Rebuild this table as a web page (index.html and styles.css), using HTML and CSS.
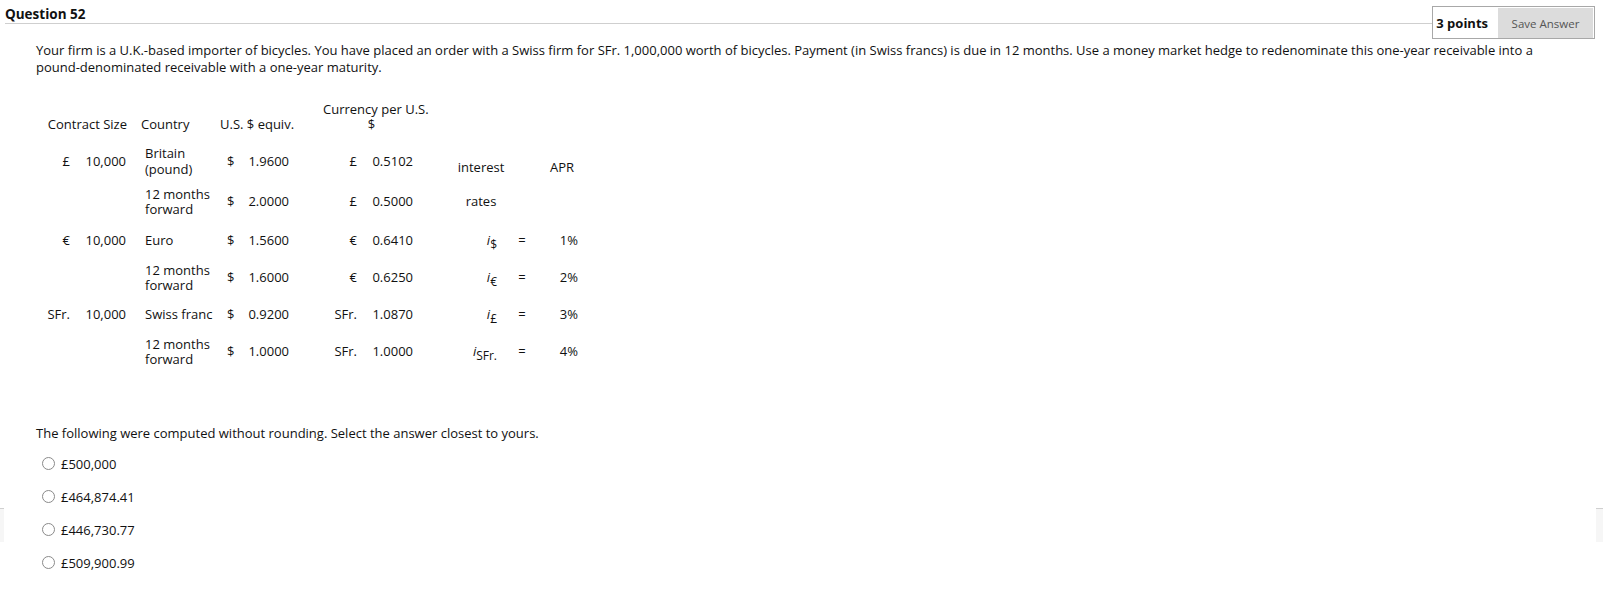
FILE: index.html
```html
<!DOCTYPE html>
<html lang="en">
<head>
<meta charset="utf-8">
<title>Question 52</title>
<link rel="stylesheet" href="styles.css">
</head>
<body>
<span class="edge edge-left"></span>
<span class="edge edge-right"></span>
<div class="qhead">
  <h3 class="qtitle">Question 52</h3>
  <div class="points">
    <span class="pts">3 points</span>
    <button class="save" type="button">Save Answer</button>
  </div>
</div>
<div class="qbody">
  <p class="qtext">Your firm is a U.K.-based importer of bicycles. You have placed an order with a Swiss firm for SFr. 1,000,000 worth of bicycles. Payment (in Swiss francs) is due in 12 months. Use a money market hedge to redenominate this one-year receivable into a pound-denominated receivable with a one-year maturity.</p>

  <table class="fx">
    <colgroup>
      <col class="c1"><col class="c2"><col class="c3"><col class="c4"><col class="c5"><col class="c6"><col class="c7"><col class="c8"><col class="c9"><col class="c10"><col class="c11">
    </colgroup>
    <tr class="hrow">
      <th colspan="2" class="h-size">Contract Size</th>
      <th class="h-country">Country</th>
      <th colspan="2" class="h-usd">U.S. $ equiv.</th>
      <th colspan="2" class="h-cur">Currency per U.S.<br>$</th>
      <th></th><th></th><th></th><th></th>
    </tr>
    <tr class="r1">
      <td class="sym">£</td><td class="num">10,000</td>
      <td class="country tall">Britain<br>(pound)</td>
      <td class="dsym">$</td><td class="dnum">1.9600</td>
      <td class="csym">£</td><td class="cnum">0.5102</td>
      <td></td>
      <td class="lbl low">interest</td><td></td><td class="apr low">APR</td>
    </tr>
    <tr class="r2">
      <td></td><td></td>
      <td class="country">12 months<br>forward</td>
      <td class="dsym">$</td><td class="dnum">2.0000</td>
      <td class="csym">£</td><td class="cnum">0.5000</td>
      <td></td>
      <td class="lbl">rates</td><td></td><td></td>
    </tr>
    <tr class="r3">
      <td class="sym">€</td><td class="num">10,000</td>
      <td class="country">Euro</td>
      <td class="dsym">$</td><td class="dnum">1.5600</td>
      <td class="csym">€</td><td class="cnum">0.6410</td>
      <td></td>
      <td class="ivar"><i>i</i><sub>$</sub></td><td class="eq">=</td><td class="pct">1%</td>
    </tr>
    <tr class="r4">
      <td></td><td></td>
      <td class="country">12 months<br>forward</td>
      <td class="dsym">$</td><td class="dnum">1.6000</td>
      <td class="csym">€</td><td class="cnum">0.6250</td>
      <td></td>
      <td class="ivar"><i>i</i><sub>€</sub></td><td class="eq">=</td><td class="pct">2%</td>
    </tr>
    <tr class="r5">
      <td class="sym">SFr.</td><td class="num">10,000</td>
      <td class="country">Swiss franc</td>
      <td class="dsym">$</td><td class="dnum">0.9200</td>
      <td class="csym">SFr.</td><td class="cnum">1.0870</td>
      <td></td>
      <td class="ivar"><i>i</i><sub>£</sub></td><td class="eq">=</td><td class="pct">3%</td>
    </tr>
    <tr class="r6">
      <td></td><td></td>
      <td class="country">12 months<br>forward</td>
      <td class="dsym">$</td><td class="dnum">1.0000</td>
      <td class="csym">SFr.</td><td class="cnum">1.0000</td>
      <td></td>
      <td class="ivar"><i>i</i><sub>SFr.</sub></td><td class="eq">=</td><td class="pct">4%</td>
    </tr>
  </table>

  <p class="prompt">The following were computed without rounding. Select the answer closest to yours.</p>
  <ul class="answers">
    <li><label><input type="radio" name="q52"><span>£500,000</span></label></li>
    <li><label><input type="radio" name="q52"><span>£464,874.41</span></label></li>
    <li><label><input type="radio" name="q52"><span>£446,730.77</span></label></li>
    <li><label><input type="radio" name="q52"><span>£509,900.99</span></label></li>
  </ul>
</div>
</body>
</html>
```

FILE: styles.css
```css
body {
  position: relative;
  margin: 0;
  font-family: "Open Sans", "DejaVu Sans", sans-serif;
  font-size: 13px;
  color: #111;
  background: #fff;
}

.edge {
  position: absolute;
  top: 508px;
  width: 5px;
  height: 33px;
  background: #f6f6f6;
  border-top: 1px solid #d0d0d0;
}
.edge-left { left: 0; width: 4px; }
.edge-right { right: 0; width: 7px; }

.qhead {
  display: flex;
  align-items: flex-start;
  padding: 0 8px 0 5px;
}

.qtitle {
  flex: 1;
  box-sizing: border-box;
  height: 24px;
  margin: 0;
  padding-top: 5px;
  border-bottom: 1px solid #cfcfcf;
  font-size: 13.5px;
  font-weight: 700;
  line-height: 18px;
}

.points {
  display: flex;
  align-items: center;
  gap: 10px;
  margin-top: 6px;
  padding: 1px 1px 0 3px;
  border: 1px solid #a8a8a8;
}

.pts {
  font-weight: 700;
  font-size: 13px;
}

.save {
  flex: none;
  width: 95px;
  height: 30px;
  padding: 0;
  border: 0;
  background: #dcdcdc;
  color: #555;
  font-family: "Open Sans", "DejaVu Sans", sans-serif;
  font-size: 11.5px;
}

.qbody {
  padding-left: 36px;
  padding-right: 30px;
}

.qtext {
  margin: 3px 0 0;
  line-height: 17px;
}

.fx {
  margin: 24px 0 0 4px;
  border-collapse: collapse;
  table-layout: fixed;
  width: 540px;
  line-height: 15px;
}

.fx th, .fx td {
  padding: 0;
  font-weight: 400;
  white-space: nowrap;
  vertical-align: middle;
}

.c1 { width: 34px; }
.c2 { width: 56px; }
.c3 { width: 86px; }
.c4 { width: 24px; }
.c5 { width: 52px; }
.c6 { width: 68px; }
.c7 { width: 60px; }
.c8 { width: 30px; }
.c9 { width: 62px; }
.c10 { width: 20px; }
.c11 { width: 48px; }

.fx .hrow { height: 40px; }
.fx .hrow th {
  vertical-align: bottom;
  padding-bottom: 8px;
  line-height: 15px;
}
.fx .hrow .h-size { text-align: right; padding-right: 3px; }
.fx .hrow .h-country { text-align: left; padding-left: 11px; }
.fx .hrow .h-usd { text-align: left; padding-left: 4px; }
.fx .hrow .h-cur { text-align: center; padding-left: 31px; }

.fx .r1 { height: 42px; }
.fx .r2 { height: 39px; }
.fx .r3 { height: 38px; }
.fx .r4, .fx .r5, .fx .r6 { height: 37px; }

.fx .sym { text-align: right; padding-right: 4px; }
.fx .num { text-align: right; padding-right: 4px; }
.fx .country { text-align: left; padding-left: 15px; }
.fx .country.tall { line-height: 16px; }
.fx .dsym { text-align: left; padding-left: 11px; }
.fx .dnum { text-align: right; padding-right: 3px; }
.fx .csym { text-align: right; padding-right: 3px; }
.fx .cnum { text-align: right; padding-right: 7px; }

.fx .lbl { text-align: center; }
.fx .low { vertical-align: bottom; padding-bottom: 7px; }
.fx .ivar { text-align: right; padding-right: 15px; }
.fx .ivar i { font-style: italic; }
.fx .ivar sub {
  font-size: 12px;
  vertical-align: -4px;
  line-height: 0;
}
.fx .eq { text-align: center; }
.fx .pct { text-align: right; padding-right: 2px; }
.fx .apr { text-align: right; padding-right: 6px; }

.prompt {
  margin: 55px 0 0;
  line-height: 17px;
}

.answers {
  list-style: none;
  margin: 5px 0 0;
  padding: 0;
}

.answers li {
  height: 33px;
  display: flex;
  align-items: center;
}

.answers label {
  display: flex;
  align-items: center;
  gap: 6px;
}

.answers input {
  appearance: none;
  -webkit-appearance: none;
  box-sizing: border-box;
  width: 13px;
  height: 13px;
  margin: 0 0 0 6px;
  border: 1px solid #8a8a8a;
  border-radius: 50%;
  background: #fff;
}
```
